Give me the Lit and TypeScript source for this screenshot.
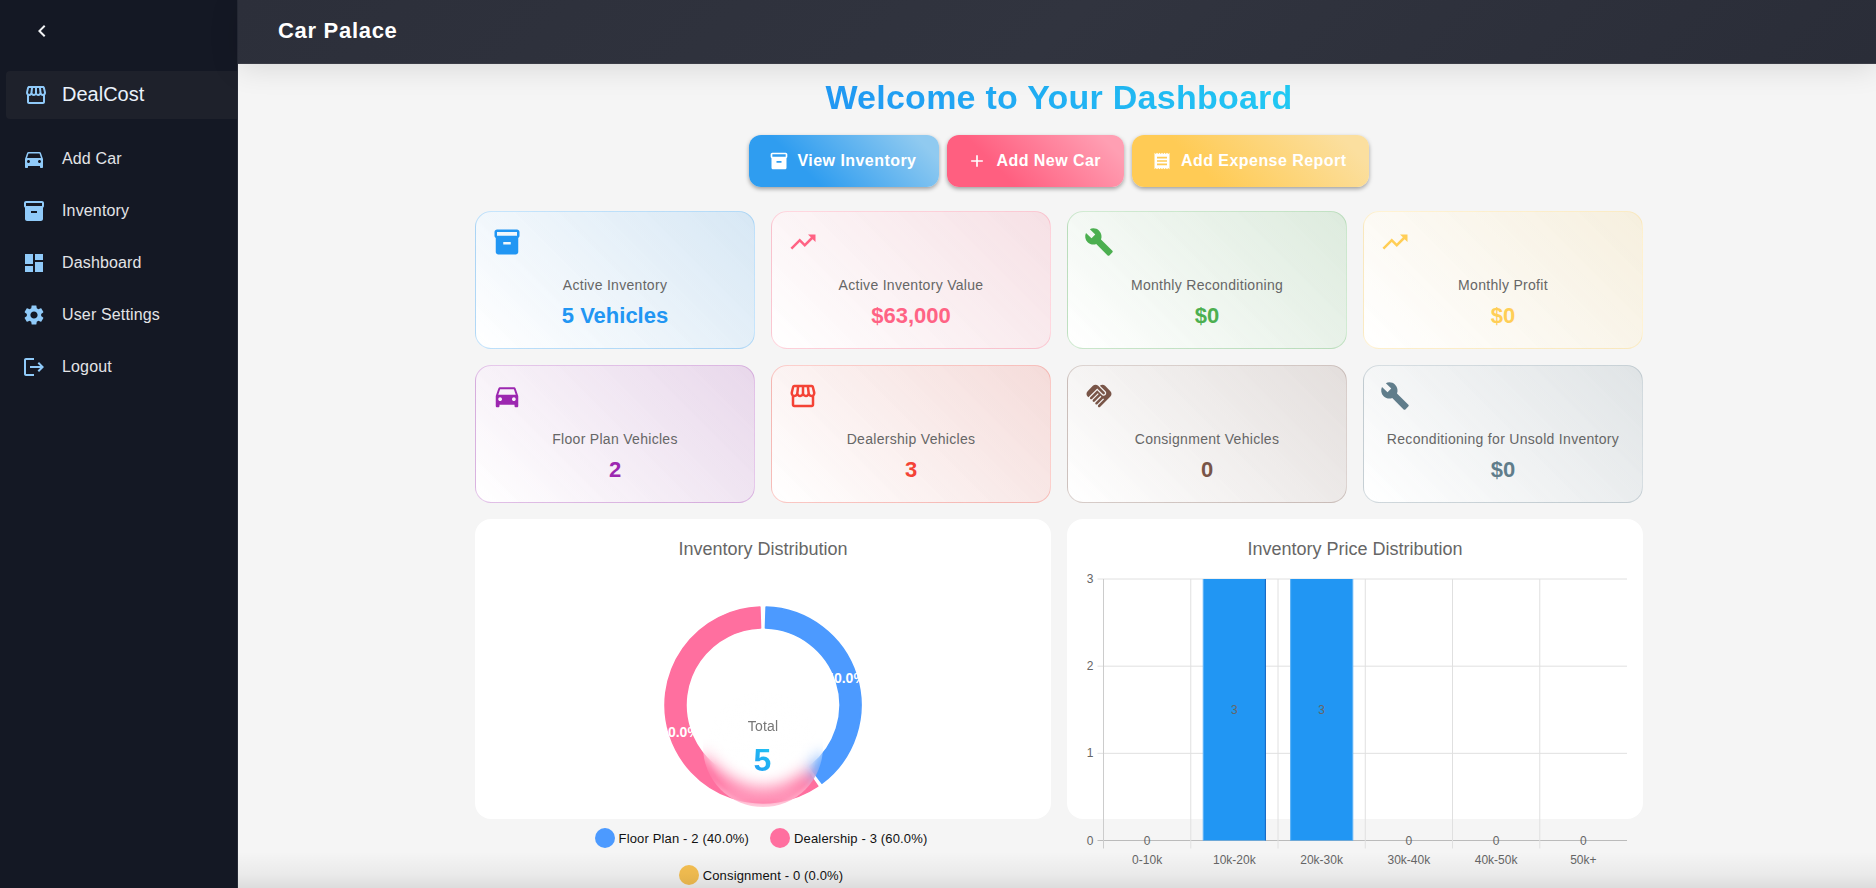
import { LitElement, html, css, svg } from 'lit';
import { customElement } from 'lit/decorators.js';

// material icon paths, all on a 24 box
const ICONS: Record<string, string> = {
  store: 'M21.9 8.89l-1.05-4.37c-.22-.9-1-1.52-1.91-1.52H5.05c-.9 0-1.69.63-1.9 1.52L2.1 8.89c-.24 1.02-.02 2.06.62 2.88.08.11.19.19.28.29V19c0 1.1.9 2 2 2h14c1.1 0 2-.9 2-2v-6.94c.09-.09.2-.18.28-.28.64-.82.87-1.87.62-2.89zm-2.99-3.9 1.05 4.37c.1.42.01.84-.25 1.17-.14.18-.44.47-.94.47-.61 0-1.14-.49-1.21-1.14L16.98 5l1.93-.01zM13 5h1.96l.54 4.52c.05.39-.07.78-.33 1.07-.22.26-.54.41-.95.41-.67 0-1.22-.59-1.22-1.31V5zM8.49 9.52 9.04 5H11v4.69c0 .72-.55 1.31-1.29 1.31-.34 0-.65-.15-.89-.41-.25-.29-.37-.68-.33-1.07zm-4.45-.16L5.05 5h1.97l-.58 4.86c-.08.65-.6 1.14-1.21 1.14-.49 0-.8-.29-.93-.47-.27-.32-.36-.75-.26-1.17zM5 19v-6.03c.08.01.15.03.23.03.87 0 1.66-.36 2.24-.95.6.6 1.4.95 2.31.95.87 0 1.65-.36 2.23-.93.59.57 1.39.93 2.29.93.84 0 1.64-.35 2.24-.95.58.59 1.37.95 2.24.95.08 0 .15-.02.23-.03V19H5z',
  car: 'M18.92 6.01C18.72 5.42 18.16 5 17.5 5h-11c-.66 0-1.21.42-1.42 1.01L3 12v8c0 .55.45 1 1 1h1c.55 0 1-.45 1-1v-1h12v1c0 .55.45 1 1 1h1c.55 0 1-.45 1-1v-8l-2.08-5.99zM6.5 16c-.83 0-1.5-.67-1.5-1.5S5.67 13 6.5 13s1.5.67 1.5 1.5S7.33 16 6.5 16zm11 0c-.83 0-1.5-.67-1.5-1.5s.67-1.5 1.5-1.5 1.5.67 1.5 1.5-.67 1.5-1.5 1.5zM5 11l1.5-4.5h11L19 11H5z',
  inventory: 'M20 2H4c-1 0-2 .9-2 2v3.01c0 .72.43 1.34 1 1.69V20c0 1.1 1.1 2 2 2h14c.9 0 2-.9 2-2V8.7c.57-.35 1-.97 1-1.69V4c0-1.1-1-2-2-2zm-5 12H9v-2h6v2zm5-7H4V4l16-.02V7z',
  dashboard: 'M3 13h8V3H3v10zm0 8h8v-6H3v6zm10 0h8V11h-8v10zm0-18v6h8V3h-8z',
  settings: 'M19.14 12.94c.04-.3.06-.61.06-.94 0-.32-.02-.64-.07-.94l2.03-1.58c.18-.14.23-.41.12-.61l-1.92-3.32c-.12-.22-.37-.29-.59-.22l-2.39.96c-.5-.38-1.03-.7-1.62-.94l-.36-2.54c-.04-.24-.24-.41-.48-.41h-3.84c-.24 0-.43.17-.47.41l-.36 2.54c-.59.24-1.13.57-1.62.94l-2.39-.96c-.22-.08-.47 0-.59.22L2.74 8.87c-.12.21-.08.47.12.61l2.03 1.58c-.05.3-.09.63-.09.94s.02.64.07.94l-2.03 1.58c-.18.14-.23.41-.12.61l1.92 3.32c.12.22.37.29.59.22l2.39-.96c.5.38 1.03.7 1.62.94l.36 2.54c.05.24.24.41.48.41h3.84c.24 0 .44-.17.47-.41l.36-2.54c.59-.24 1.13-.56 1.62-.94l2.39.96c.22.08.47 0 .59-.22l1.92-3.32c.12-.22.07-.47-.12-.61l-2.01-1.58zM12 15.6c-1.98 0-3.6-1.62-3.6-3.6s1.62-3.6 3.6-3.6 3.6 1.62 3.6 3.6-1.62 3.6-3.6 3.6z',
  logout: 'M17 7l-1.41 1.41L18.17 11H8v2h10.17l-2.58 2.58L17 17l5-5zM4 5h8V3H4c-1.1 0-2 .9-2 2v14c0 1.1.9 2 2 2h8v-2H4V5z',
  chevron: 'M15.41 7.41 14 6l-6 6 6 6 1.41-1.41L10.83 12z',
  add: 'M19 13h-6v6h-2v-6H5v-2h6V5h2v6h6v2z',
  receipt: 'M18 17H6v-2h12v2zm0-4H6v-2h12v2zm0-4H6V7h12v2zM3 22l1.5-1.5L6 22l1.5-1.5L9 22l1.5-1.5L12 22l1.5-1.5L15 22l1.5-1.5L18 22l1.5-1.5L21 22V2l-1.5 1.5L18 2l-1.5 1.5L15 2l-1.5 1.5L12 2l-1.5 1.5L9 2 7.5 3.5 6 2 4.5 3.5 3 2v20z',
  trending: 'M16 6l2.29 2.29-4.88 4.88-4-4L2 16.59 3.41 18l6-6 4 4 6.3-6.29L22 12V6z',
  build: 'M22.7 19l-9.1-9.1c.9-2.3.4-5-1.5-6.9-2-2-5-2.4-7.4-1.3L9 6 6 9 1.6 4.7C.4 7.1.9 10.1 2.9 12.1c1.9 1.9 4.6 2.4 6.9 1.5l9.1 9.1c.4.4 1 .4 1.4 0l2.3-2.3c.5-.4.5-1.1.1-1.4z',
  handshake: 'M16.48 10.41c-.39.39-1.04.39-1.43 0l-4.47-4.46-7.05 7.04-.66-.63c-1.17-1.17-1.17-3.07 0-4.24l4.24-4.24c1.17-1.17 3.07-1.17 4.24 0L16.48 9c.39.39.39 1.02 0 1.41zm.7-2.12c.78.78.78 2.05 0 2.83-1.27 1.27-2.61.22-2.83 0l-3.76-3.76-5.57 5.57c-.39.39-.39 1.02 0 1.41.39.39 1.02.39 1.42 0l4.62-4.62.71.71-4.62 4.62c-.39.39-.39 1.02 0 1.41.39.39 1.02.39 1.42 0l4.62-4.62.71.71-4.62 4.62c-.39.39-.39 1.02 0 1.41.39.39 1.02.39 1.41 0l4.62-4.62.71.71-4.62 4.62c-.39.39-.39 1.02 0 1.41.39.39 1.02.39 1.41 0l8.32-8.34c1.17-1.17 1.17-3.07 0-4.24l-4.24-4.24c-1.15-1.15-3.01-1.17-4.18-.06l4.26 4.27z',
};

const icon = (name: string, size: number, color = 'currentColor') => html`
  <svg class="icon" width=${size} height=${size} viewBox="0 0 24 24" fill=${color}><path d=${ICONS[name]}></path></svg>
`;

const NAV = [
  { label: 'Add Car', icon: 'car' },
  { label: 'Inventory', icon: 'inventory' },
  { label: 'Dashboard', icon: 'dashboard' },
  { label: 'User Settings', icon: 'settings' },
  { label: 'Logout', icon: 'logout' },
];

const BUTTONS = [
  { label: 'View Inventory', icon: 'inventory', cls: 'blue' },
  { label: 'Add New Car', icon: 'add', cls: 'pink' },
  { label: 'Add Expense Report', icon: 'receipt', cls: 'yellow' },
];

const STATS = [
  { label: 'Active Inventory', value: '5 Vehicles', icon: 'inventory', rgb: '33,150,243' },
  { label: 'Active Inventory Value', value: '$63,000', icon: 'trending', rgb: '255,99,132' },
  { label: 'Monthly Reconditioning', value: '$0', icon: 'build', rgb: '76,175,80' },
  { label: 'Monthly Profit', value: '$0', icon: 'trending', rgb: '255,206,86' },
  { label: 'Floor Plan Vehicles', value: '2', icon: 'car', rgb: '156,39,176' },
  { label: 'Dealership Vehicles', value: '3', icon: 'store', rgb: '244,67,54' },
  { label: 'Consignment Vehicles', value: '0', icon: 'handshake', rgb: '121,85,72' },
  { label: 'Reconditioning for Unsold Inventory', value: '$0', icon: 'build', rgb: '96,125,139' },
];

const LEGEND = [
  { label: 'Floor Plan - 2 (40.0%)', color: '#4c9aff' },
  { label: 'Dealership - 3 (60.0%)', color: '#ff6f9f' },
  { label: 'Consignment - 0 (0.0%)', color: '#f7c152' },
];

const PRICES = [
  { label: '0-10k', count: 0 },
  { label: '10k-20k', count: 3 },
  { label: '20k-30k', count: 3 },
  { label: '30k-40k', count: 0 },
  { label: '40k-50k', count: 0 },
  { label: '50k+', count: 0 },
];

// ring segment, angles in degrees clockwise from 12 o'clock
function ringPath(cx: number, cy: number, r0: number, r1: number, a0: number, a1: number) {
  const pt = (r: number, a: number) => {
    const t = (a * Math.PI) / 180;
    return `${(cx + r * Math.sin(t)).toFixed(2)} ${(cy - r * Math.cos(t)).toFixed(2)}`;
  };
  const large = a1 - a0 > 180 ? 1 : 0;
  return `M${pt(r1, a0)}A${r1} ${r1} 0 ${large} 1 ${pt(r1, a1)}L${pt(r0, a1)}A${r0} ${r0} 0 ${large} 0 ${pt(r0, a0)}Z`;
}

@customElement('app-root')
export class AppRoot extends LitElement {
  static styles = css`
    :host {
      display: flex;
      height: 100vh;
      overflow: hidden;
      background: #f5f5f5;
      font-family: 'Liberation Sans', Arial, sans-serif;
    }

    .icon {
      display: block;
      flex: none;
    }

    /* sidebar */
    .sidebar {
      width: 238px;
      flex: none;
      box-sizing: border-box;
      background: #141824;
      border-right: 1px solid #262a36;
      color: #e3e4e7;
    }

    .collapse {
      height: 61px;
      padding-left: 30px;
      display: flex;
      align-items: center;
      color: #f2f3f5;
    }

    .brand {
      margin: 10px 0 14px 6px;
      height: 48px;
      display: flex;
      align-items: center;
      gap: 14px;
      padding-left: 18px;
      background: #1e212b;
      border-radius: 4px 0 0 4px;
      font-size: 20px;
      color: #eaf2fb;
    }

    .brand span {
      padding-bottom: 2px;
    }

    .nav-item {
      height: 52px;
      display: flex;
      align-items: center;
      gap: 16px;
      padding-left: 22px;
      font-size: 16px;
      letter-spacing: 0.15px;
    }

    .brand .icon,
    .nav-item .icon {
      color: #90caf9;
    }

    /* main column */
    .main {
      flex: 1;
      min-width: 0;
      position: relative;
      display: flex;
      flex-direction: column;
    }

    .topbar {
      height: 64px;
      flex: none;
      box-sizing: border-box;
      padding: 0 0 2px 40px;
      display: flex;
      align-items: center;
      background: linear-gradient(135deg, #2c2f3a, #31343f 50%, #2a2d38);
      border-bottom: 1px solid #3a3c46;
      box-shadow: 0 4px 30px rgba(0, 0, 0, 0.12);
      position: relative;
      z-index: 1;
      color: #fff;
      font-size: 22px;
      font-weight: 700;
      letter-spacing: 0.7px;
    }

    .content {
      flex: 1;
      display: flex;
      flex-direction: column;
      align-items: center;
      padding: 14px 0 0 4px;
    }

    .fade {
      position: absolute;
      left: 0;
      right: 0;
      bottom: 0;
      height: 36px;
      background: linear-gradient(rgba(0, 0, 0, 0), rgba(0, 0, 0, 0.045) 60%, rgba(0, 0, 0, 0.1));
      pointer-events: none;
    }

    .title {
      margin: 0 0 19px;
      font-size: 34px;
      line-height: 38px;
      font-weight: 700;
      letter-spacing: 0.25px;
      background: linear-gradient(45deg, #2196f3, #21cbf3);
      -webkit-background-clip: text;
      background-clip: text;
      color: transparent;
    }

    .actions {
      display: flex;
      gap: 8px;
      margin-bottom: 24px;
    }

    .action {
      height: 52px;
      box-sizing: border-box;
      display: flex;
      align-items: center;
      gap: 9px;
      padding: 0 23px 0 20px;
      border-radius: 12px;
      color: #fff;
      font-size: 16px;
      font-weight: 700;
      letter-spacing: 0.45px;
      box-shadow: 0 2px 4px rgba(0, 0, 0, 0.35);
    }

    .action.blue {
      background: linear-gradient(45deg, #2f9df0 30%, #90caf0 90%);
    }

    .action.pink {
      background: linear-gradient(45deg, #ff5f80 30%, #ff9fb3 90%);
    }

    .action.yellow {
      background: linear-gradient(45deg, #ffcb55 30%, #fbdf9f 90%);
    }

    .stats {
      width: 1168px;
      display: grid;
      grid-template-columns: repeat(4, 280px);
      gap: 16px;
    }

    .stat {
      height: 138px;
      box-sizing: border-box;
      padding: 15px 16px;
      display: flex;
      flex-direction: column;
      border: 1px solid;
      border-radius: 16px;
    }

    .stat-label {
      margin-top: 18px;
      font-size: 14px;
      line-height: 20px;
      letter-spacing: 0.3px;
      text-align: center;
      color: #666;
      white-space: nowrap;
    }

    .stat-value {
      margin-top: 5px;
      font-size: 22px;
      line-height: 32px;
      font-weight: 700;
      text-align: center;
    }

    .charts {
      width: 1168px;
      margin-top: 16px;
      display: grid;
      grid-template-columns: 576px 576px;
      gap: 16px;
    }

    .chart-card {
      height: 300px;
      background: #fff;
      border-radius: 16px;
      display: flex;
      flex-direction: column;
    }

    .chart-title {
      flex: none;
      margin: 0;
      padding-top: 19px;
      height: 50px;
      box-sizing: border-box;
      font-size: 18px;
      line-height: 22px;
      font-weight: 400;
      text-align: center;
      color: #666;
    }

    .donut-wrap {
      flex: none;
      position: relative;
      height: 238px;
    }

    .donut-wrap svg,
    .bars {
      display: block;
      overflow: visible;
    }

    .ring-label {
      font-size: 14px;
      font-weight: 700;
      fill: #fff;
      text-anchor: middle;
    }

    /* label that sits over the hole of the ring and blurs what it covers */
    .center {
      position: absolute;
      left: 228px;
      top: 118px;
      width: 120px;
      height: 120px;
      border-radius: 50%;
      display: flex;
      flex-direction: column;
      align-items: center;
      justify-content: center;
      background: radial-gradient(circle, #fff 0%, rgba(255, 255, 255, 0.9) 30%, rgba(255, 255, 255, 0) 66%);
      -webkit-backdrop-filter: blur(8px);
      backdrop-filter: blur(8px);
    }

    .center-label {
      font-size: 14px;
      line-height: 20px;
      letter-spacing: 0.2px;
      color: #777;
    }

    .center-value {
      margin: 5px 1px 0 0;
      font-size: 32px;
      line-height: 38px;
      font-weight: 700;
      background: linear-gradient(45deg, #2196f3, #21cbf3);
      -webkit-background-clip: text;
      background-clip: text;
      color: transparent;
    }

    .legend {
      width: 400px;
      margin: 0 auto;
      padding: 21px 4px 0 0;
      display: flex;
      flex-wrap: wrap;
      justify-content: center;
      gap: 17px 21px;
      flex: none;
    }

    .legend-item {
      display: flex;
      align-items: center;
      gap: 4px;
      height: 20px;
      font-size: 13px;
      letter-spacing: 0.15px;
      color: #111;
      white-space: nowrap;
    }

    .dot {
      width: 20px;
      height: 20px;
      border-radius: 50%;
    }

    .bars text {
      font-size: 12px;
      fill: #666;
    }
  `;

  private renderDonut() {
    const cx = 288, cy = 136;
    return html`
      <svg width="576" height="238" viewBox="0 0 576 238">
        <path d=${ringPath(cx, cy, 77, 98, 1.8, 143)} fill="#4c9aff" stroke="#4c9aff" stroke-width="1.5" stroke-linejoin="round"></path>
        <path d=${ringPath(cx, cy, 77, 98, 146, 358.2)} fill="#ff6f9f" stroke="#ff6f9f" stroke-width="1.5" stroke-linejoin="round"></path>
        <text class="ring-label" x="371" y="114">40.0%</text>
        <text class="ring-label" x="205" y="168">60.0%</text>
      </svg>
    `;
  }

  private renderBars() {
    // plot box inside the svg, which starts at the card's left edge and under its title
    const left = 36.5, right = 560, top = 10, bottom = 271.5;
    const step = (right - left) / 6;
    const rowH = (bottom - top) / 3;
    return html`
      <svg class="bars" width="576" height="300" viewBox="0 0 576 300">
        ${[0, 1, 2, 3].map((v) => svg`
          <line x1=${left - 6} x2=${right} y1=${bottom - v * rowH} y2=${bottom - v * rowH} stroke=${v === 0 ? '#bbb' : '#e0e0e0'}></line>
          <text x=${left - 10} y=${bottom - v * rowH + 4} text-anchor="end">${v}</text>
        `)}
        ${[0, 1, 2, 3, 4, 5].map((i) => svg`
          <line x1=${left + i * step} x2=${left + i * step} y1=${top} y2=${bottom + 8} stroke=${i === 0 ? '#ccc' : '#e0e0e0'}></line>
        `)}
        ${PRICES.map((p, i) => {
          const mid = left + (i + 0.5) * step;
          const h = p.count * rowH;
          return svg`
            ${p.count > 0
              ? svg`<rect x=${mid - 31.5} y=${bottom - h} width="63" height=${h} fill="#2196f3"></rect>
                    <line x1=${mid - 31} x2=${mid - 31} y1=${bottom - h} y2=${bottom} stroke="#64b5f6"></line>
                    <line x1=${mid + 31} x2=${mid + 31} y1=${bottom - h} y2=${bottom} stroke=${i === 1 ? '#1565c0' : '#64b5f6'}></line>`
              : ''}
            <text x=${mid} y=${bottom - h / 2 + 4} text-anchor="middle">${p.count}</text>
            <text x=${mid} y=${bottom + 23} text-anchor="middle">${p.label}</text>
          `;
        })}
      </svg>
    `;
  }

  render() {
    return html`
      <aside class="sidebar">
        <div class="collapse">${icon('chevron', 24)}</div>
        <div class="brand">${icon('store', 24)}<span>DealCost</span></div>
        ${NAV.map((n) => html`<div class="nav-item">${icon(n.icon, 24)}<span>${n.label}</span></div>`)}
      </aside>
      <div class="main">
        <header class="topbar">Car Palace</header>
        <div class="content">
          <h1 class="title">Welcome to Your Dashboard</h1>
          <div class="actions">
            ${BUTTONS.map((b) => html`<div class="action ${b.cls}">${icon(b.icon, 20)}<span>${b.label}</span></div>`)}
          </div>
          <div class="stats">
            ${STATS.map((s) => html`
              <div class="stat" style="background: linear-gradient(45deg, #fff, rgba(${s.rgb}, 0.14)); border-color: rgba(${s.rgb}, 0.25)">
                ${icon(s.icon, 30, `rgb(${s.rgb})`)}
                <div class="stat-label">${s.label}</div>
                <div class="stat-value" style="color: rgb(${s.rgb})">${s.value}</div>
              </div>
            `)}
          </div>
          <div class="charts">
            <section class="chart-card">
              <h2 class="chart-title">Inventory Distribution</h2>
              <div class="donut-wrap">
                ${this.renderDonut()}
                <div class="center">
                  <div class="center-label">Total</div>
                  <div class="center-value">5</div>
                </div>
              </div>
              <div class="legend">
                ${LEGEND.map((l) => html`<div class="legend-item"><span class="dot" style="background: ${l.color}"></span>${l.label}</div>`)}
              </div>
            </section>
            <section class="chart-card">
              <h2 class="chart-title">Inventory Price Distribution</h2>
              ${this.renderBars()}
            </section>
          </div>
        </div>
        <div class="fade"></div>
      </div>
    `;
  }
}

declare global {
  interface HTMLElementTagNameMap {
    'app-root': AppRoot;
  }
}
